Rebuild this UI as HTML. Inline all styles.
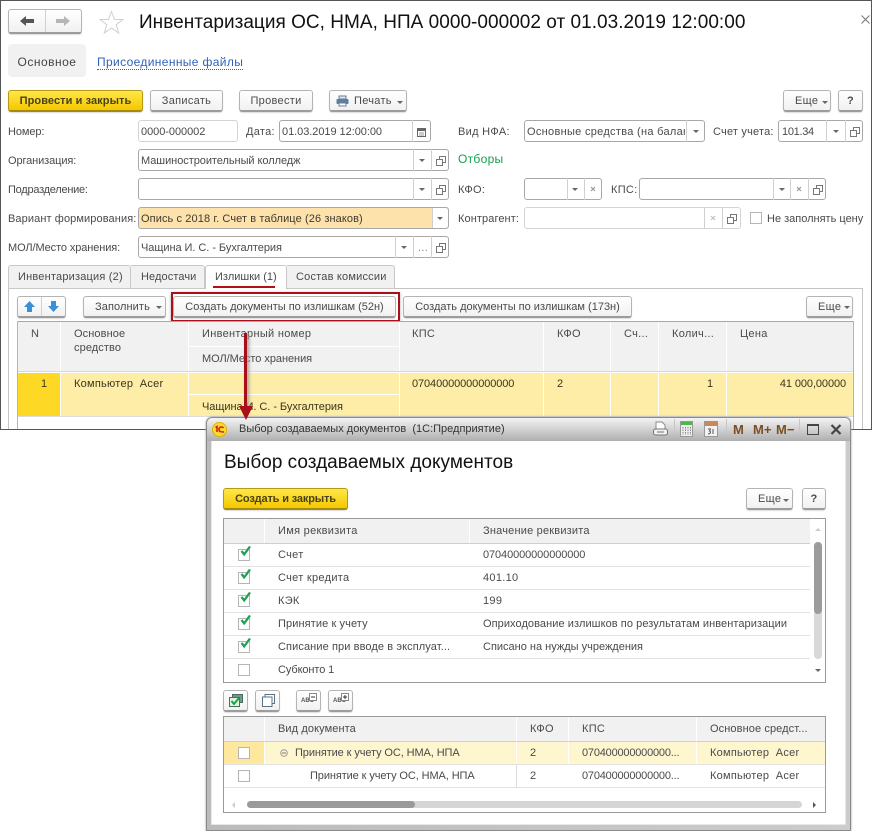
<!DOCTYPE html>
<html lang="ru"><head><meta charset="utf-8"><title>Инвентаризация</title>
<style>
html,body{margin:0;padding:0;background:#fff}
#p{position:relative;width:872px;height:831px;overflow:hidden;background:#fff;font:11px/14px "Liberation Sans","Noto Sans CJK SC",sans-serif;color:#4a4a4a;letter-spacing:.3px}
#p div,#p i,#p svg.a,#p span{position:absolute;box-sizing:border-box;display:block}
.t{white-space:nowrap;height:14px;margin-top:1px}
.c{text-align:center}
.b{height:22px;border:1px solid #b4b4b4;border-bottom:2px solid #9c9c9c;border-radius:3px;background:linear-gradient(#fff,#f1f1f1);text-align:center;line-height:20px;white-space:nowrap;box-shadow:0 1px 1px #ddd}
.y{background:linear-gradient(#ffe74a,#f5c800);border-color:#b89a10;border-bottom-color:#a78a08;color:#4a4216}
.f{height:22px;border:1px solid #a8a8a8;border-radius:3px;background:#fff}
.l{border-color:#d4d4d4}
.v{width:1px;background:#d0d0d0}
.h{height:1px;background:#e2e2e2}
.g{width:1px;background:#dcdcdc}
.dn{width:0;height:0;border-left:3px solid transparent;border-right:3px solid transparent;border-top:3px solid #666}
.k{width:12px;height:12px;border:1px solid #b5b5b5;background:#fff}
.w{width:1px;background:#fff}
.n{letter-spacing:-.1px}
.m{letter-spacing:-.05px}
.z{letter-spacing:0}
.o{letter-spacing:.1px}
.q{letter-spacing:.2px}
</style></head><body><div id="p">
<svg width="0" height="0" style="position:absolute"><defs>
<symbol id="o" viewBox="0 0 10 10"><path d="M3.500 3V.5h6v6H7M.5 3.500h6v6h-6z" fill="none" stroke="#777"/></symbol>
<symbol id="x" viewBox="0 0 6 6"><path d="M1 1l4 4M5 1L1 5" stroke="#999" stroke-width="1.200"/></symbol>
<symbol id="ch" viewBox="0 0 12 12"><path d="M2.500 5l2.700 3.400L11 0.500" fill="none" stroke="#1fa055" stroke-width="2.300"/></symbol>
</defs></svg>

<!-- outer frame -->
<div style="left:0;top:0;width:872px;height:430px;border:1px solid #555"></div>

<!-- nav -->
<div class="b" style="left:8px;top:9px;width:74px;height:25px"></div>
<i class="v" style="left:45px;top:10px;height:22px"></i>
<svg class="a" style="left:19px;top:15px" width="16" height="12"><path d="M1 6l6-5v3h8v4H7v3z" fill="#555"/></svg>
<svg class="a" style="left:55px;top:15px" width="16" height="12"><path d="M15 6L9 1v3H1v4h8v3z" fill="#b5b5b5"/></svg>
<svg class="a" style="left:99px;top:10px" width="25" height="24"><path d="M12.500 1.500l3 8h8.500l-6.800 5.200 2.500 8.300-7.200-5-7.200 5 2.500-8.300L1 9.500h8.500z" fill="#fff" stroke="#d0d0d0"/></svg>
<div class="t" style="left:139px;top:11px;height:22px;font-size:19px;line-height:22px;color:#111;letter-spacing:.03px">Инвентаризация ОС, НМА, НПА 0000-000002 от 01.03.2019 12:00:00</div>
<svg class="a" style="left:861px;top:15px" width="9" height="9"><path d="M.5.500l8 8M8.500.5l-8 8" stroke="#777"/></svg>

<div style="left:8px;top:44px;width:78px;height:33px;background:#f1f1f1;border-radius:4px"></div>
<div class="t c" style="left:8px;top:54px;width:78px;font-size:12px;color:#444;letter-spacing:.5px">Основное</div>
<div class="t" style="left:97px;top:54px;font-size:12px;color:#2f63b8;border-bottom:1px dotted #2f63b8;height:15px;letter-spacing:.36px">Присоединенные файлы</div>

<!-- command bar -->
<div class="b y" style="left:8px;top:90px;width:135px;font-weight:bold;letter-spacing:.08px">Провести и закрыть</div>
<div class="b" style="left:150px;top:90px;width:73px">Записать</div>
<div class="b" style="left:239px;top:90px;width:74px">Провести</div>
<div class="b" style="left:329px;top:90px;width:78px;text-align:left;padding-left:24px">Печать</div>
<svg class="a" style="left:336px;top:95px" width="13" height="12"><path d="M3 1h7v3H3z" fill="#dfe7ef" stroke="#6b7f95"/><rect x="0.500" y="4" width="12" height="5" rx="1" fill="#5f7d9c"/><path d="M3 8h7v3H3z" fill="#fff" stroke="#6b7f95"/></svg>
<i class="dn" style="left:397px;top:101px"></i>
<div class="b" style="left:783px;top:90px;width:48px;text-align:left;padding-left:11px">Еще</div>
<i class="dn" style="left:822px;top:101px"></i>
<div class="b" style="left:838px;top:90px;width:25px;font-weight:bold">?</div>

<!-- row 1 -->
<div class="t n" style="left:8px;top:124px">Номер:</div>
<div class="f l" style="left:138px;top:120px;width:100px"></div>
<div class="t m" style="left:141px;top:124px">0000-000002</div>
<div class="t" style="left:246px;top:124px">Дата:</div>
<div class="f" style="left:279px;top:120px;width:152px"></div>
<div class="t m" style="left:282px;top:124px">01.03.2019 12:00:00</div>
<i class="v" style="left:412px;top:120px;height:22px"></i>
<svg class="a" style="left:417px;top:127px" width="10" height="10"><rect x=".5" y="1.500" width="8" height="8" fill="#fff" stroke="#666"/><path d="M1 1h7v3H1z" fill="#666"/><path d="M2 6h5M2 8h5" stroke="#999"/></svg>
<div class="t" style="left:458px;top:124px">Вид НФА:</div>
<div class="f" style="left:524px;top:120px;width:181px"></div>
<div class="t" style="left:527px;top:124px;width:158px;overflow:hidden">Основные средства (на баланс</div>
<i class="v" style="left:686px;top:120px;height:22px"></i><i class="dn" style="left:693px;top:130px"></i>
<div class="t q" style="left:713px;top:124px">Счет учета:</div>
<div class="f" style="left:778px;top:120px;width:85px"></div>
<div class="t" style="left:782px;top:124px;letter-spacing:-.3px">101.34</div>
<i class="v" style="left:826px;top:120px;height:22px"></i><i class="dn" style="left:833px;top:130px"></i>
<i class="v" style="left:845px;top:120px;height:22px"></i><svg class="a" style="left:850px;top:127px" width="10" height="10"><use href="#o"/></svg>

<!-- row 2 -->
<div class="t n" style="left:8px;top:153px">Организация:</div>
<div class="f" style="left:138px;top:149px;width:311px"></div>
<div class="t m" style="left:141px;top:153px">Машиностроительный колледж</div>
<i class="v" style="left:413px;top:149px;height:22px"></i><i class="dn" style="left:419px;top:159px"></i>
<i class="v" style="left:431px;top:149px;height:22px"></i><svg class="a" style="left:436px;top:156px" width="10" height="10"><use href="#o"/></svg>
<div class="t" style="left:458px;top:150px;font-size:12px;color:#13a04f;height:16px;line-height:16px">Отборы</div>

<!-- row 3 -->
<div class="t" style="left:8px;top:182px;letter-spacing:-.25px">Подразделение:</div>
<div class="f" style="left:138px;top:178px;width:311px"></div>
<i class="v" style="left:413px;top:178px;height:22px"></i><i class="dn" style="left:419px;top:188px"></i>
<i class="v" style="left:431px;top:178px;height:22px"></i><svg class="a" style="left:436px;top:185px" width="10" height="10"><use href="#o"/></svg>
<div class="t" style="left:458px;top:182px">КФО:</div>
<div class="f" style="left:524px;top:178px;width:78px"></div>
<i class="v" style="left:567px;top:178px;height:22px"></i><i class="dn" style="left:572px;top:188px"></i>
<i class="v" style="left:584px;top:178px;height:22px"></i><svg class="a" style="left:590px;top:186px" width="6" height="6"><use href="#x"/></svg>
<div class="t" style="left:611px;top:182px">КПС:</div>
<div class="f" style="left:639px;top:178px;width:187px"></div>
<i class="v" style="left:773px;top:178px;height:22px"></i><i class="dn" style="left:779px;top:188px"></i>
<i class="v" style="left:790px;top:178px;height:22px"></i><svg class="a" style="left:796px;top:186px" width="6" height="6"><use href="#x"/></svg>
<i class="v" style="left:808px;top:178px;height:22px"></i><svg class="a" style="left:813px;top:185px" width="10" height="10"><use href="#o"/></svg>

<!-- row 4 -->
<div class="t o" style="left:8px;top:211px">Вариант формирования:</div>
<div class="f" style="left:138px;top:207px;width:311px;background:#fde2ab"></div>
<div style="left:432px;top:208px;width:16px;height:20px;background:#fff;border-left:1px solid #d0d0d0;border-radius:0 3px 3px 0"></div>
<div class="t o" style="left:141px;top:211px;color:#3f3a30">Опись с 2018 г. Счет в таблице (26 знаков)</div>
<i class="dn" style="left:437px;top:217px"></i>
<div class="t o" style="left:458px;top:211px">Контрагент:</div>
<div class="f l" style="left:524px;top:207px;width:217px"></div>
<i class="v" style="left:704px;top:207px;height:22px"></i><svg class="a" style="left:710px;top:215px" width="6" height="6" opacity=".6"><use href="#x"/></svg>
<i class="v" style="left:722px;top:207px;height:22px"></i><svg class="a" style="left:727px;top:214px" width="10" height="10"><use href="#o"/></svg>
<i class="k" style="left:750px;top:212px"></i>
<div class="t z" style="left:767px;top:211px">Не заполнять цену</div>

<!-- row 5 -->
<div class="t n" style="left:8px;top:240px">МОЛ/Место хранения:</div>
<div class="f" style="left:138px;top:236px;width:311px"></div>
<div class="t m" style="left:141px;top:240px">Чащина И. С. - Бухгалтерия</div>
<i class="v" style="left:395px;top:236px;height:22px"></i><i class="dn" style="left:401px;top:246px"></i>
<i class="v" style="left:413px;top:236px;height:22px"></i><div class="t" style="left:418px;top:240px;color:#888">...</div>
<i class="v" style="left:431px;top:236px;height:22px"></i><svg class="a" style="left:436px;top:243px" width="10" height="10"><use href="#o"/></svg>

<!-- tabs -->
<div style="left:8px;top:288px;width:855px;height:141px;border:1px solid #c4c4c4;border-bottom:0"></div>
<div style="left:8px;top:265px;width:123px;height:24px;background:#f1f1f1;border:1px solid #c8c8c8;border-radius:3px 3px 0 0"></div>
<div class="t q" style="left:18px;top:269px">Инвентаризация (2)</div>
<div style="left:131px;top:265px;width:74px;height:24px;background:#f1f1f1;border:1px solid #c8c8c8;border-left:0;border-radius:0 3px 0 0"></div>
<div class="t o" style="left:141px;top:269px">Недостачи</div>
<div style="left:205px;top:265px;width:82px;height:24px;background:#fff;border:1px solid #c8c8c8;border-bottom:0;border-radius:3px 3px 0 0"></div>
<div class="t z" style="left:215px;top:269px">Излишки (1)</div>
<div style="left:213px;top:286px;width:62px;height:2px;background:#b3101a"></div>
<div style="left:287px;top:265px;width:108px;height:24px;background:#f1f1f1;border:1px solid #c8c8c8;border-left:0;border-radius:0 3px 0 0"></div>
<div class="t q" style="left:296px;top:269px">Состав комиссии</div>

<!-- toolbar -->
<div class="b" style="left:17px;top:296px;width:49px"></div>
<i class="v" style="left:41px;top:297px;height:19px"></i>
<svg class="a" style="left:24px;top:301px" width="11" height="11"><path d="M5.500 0L11 6H8v5H3V6H0z" fill="#3b8fd4"/></svg>
<svg class="a" style="left:48px;top:301px" width="11" height="11"><path d="M5.500 11L0 5h3V0h5v5h3z" fill="#3b8fd4"/></svg>
<div class="b o" style="left:83px;top:296px;width:83px;text-align:left;padding-left:11px">Заполнить</div>
<i class="dn" style="left:156px;top:306px"></i>
<div class="b z" style="left:173px;top:296px;width:223px">Создать документы по излишкам (52н)</div>
<div style="left:171px;top:292px;width:229px;height:30px;border:2px solid #a90f18;box-shadow:0 1px 3px #aaa"></div>
<div class="b z" style="left:403px;top:296px;width:229px">Создать документы по излишкам (173н)</div>
<div class="b" style="left:806px;top:296px;width:47px;text-align:left;padding-left:11px">Еще</div>
<i class="dn" style="left:844px;top:306px"></i>

<!-- main table -->
<div style="left:17px;top:321px;width:836px;height:1px;background:#a8a8a8"></div>
<div style="left:17px;top:321px;width:1px;height:108px;background:#b4b4b4"></div>
<div style="left:853px;top:321px;width:1px;height:108px;background:#b4b4b4"></div>
<div style="left:18px;top:322px;width:835px;height:49px;background:#f1f1f1"></div>
<i class="w" style="left:60px;top:322px;height:49px"></i><i class="w" style="left:188px;top:322px;height:49px"></i><i class="w" style="left:399px;top:322px;height:49px"></i><i class="w" style="left:543px;top:322px;height:49px"></i><i class="w" style="left:610px;top:322px;height:49px"></i><i class="w" style="left:658px;top:322px;height:49px"></i><i class="w" style="left:726px;top:322px;height:49px"></i>
<div style="left:188px;top:346px;width:211px;height:1px;background:#fff"></div>
<div style="left:18px;top:371px;width:835px;height:1px;background:#d8d8d8"></div>
<div class="t" style="left:31px;top:326px">N</div>
<div class="t o" style="left:74px;top:326px">Основное</div>
<div class="t o" style="left:74px;top:340px">средство</div>
<div class="t" style="left:202px;top:326px">Инвентарный номер</div>
<div class="t m" style="left:202px;top:351px">МОЛ/Место хранения</div>
<div class="t" style="left:412px;top:326px">КПС</div>
<div class="t" style="left:557px;top:326px">КФО</div>
<div class="t" style="left:624px;top:326px">Сч...</div>
<div class="t" style="left:672px;top:326px">Колич...</div>
<div class="t" style="left:740px;top:326px">Цена</div>

<div style="left:18px;top:373px;width:835px;height:43px;background:#fdeda6"></div>
<div style="left:18px;top:373px;width:42px;height:43px;background:#fdd925"></div>
<i class="w" style="left:60px;top:373px;height:43px"></i><i class="w" style="left:188px;top:373px;height:43px"></i><i class="w" style="left:399px;top:373px;height:43px"></i><i class="w" style="left:543px;top:373px;height:43px"></i><i class="w" style="left:610px;top:373px;height:43px"></i><i class="w" style="left:658px;top:373px;height:43px"></i><i class="w" style="left:726px;top:373px;height:43px"></i>
<div style="left:188px;top:394px;width:211px;height:1px;background:#fff"></div>
<div style="left:18px;top:416px;width:835px;height:1px;background:#ddd"></div>
<div class="t" style="left:41px;top:376px;color:#3a3520">1</div>
<div class="t" style="left:74px;top:376px;color:#3a3520;letter-spacing:.25px">Компьютер&nbsp; Acer</div>
<div class="t n" style="left:412px;top:376px;color:#3a3520">07040000000000000</div>
<div class="t" style="left:557px;top:376px;color:#3a3520">2</div>
<div class="t" style="left:707px;top:376px;color:#3a3520">1</div>
<div class="t n" style="left:766px;top:376px;width:80px;text-align:right;color:#3a3520">41 000,00000</div>
<div class="t m" style="left:202px;top:399px;color:#3a3520">Чащина И. С. - Бухгалтерия</div>

<!-- dialog -->
<div style="left:206px;top:417px;width:645px;height:414px;background:linear-gradient(90deg,#bbb,#ccc);border:1px solid #8a8a8a;border-radius:6px 6px 0 0;box-shadow:0 0 2px #999"></div>
<div style="left:207px;top:418px;width:643px;height:23px;background:linear-gradient(#f4f4f4,#aeaeae);border-radius:5px 5px 0 0"></div>
<div style="left:211px;top:441px;width:635px;height:384px;background:#fff;border:1px solid #e8e8e8;border-top:0"></div>
<svg class="a" style="left:212px;top:422px" width="15" height="15"><circle cx="7.500" cy="7.500" r="7" fill="#ffd92e" stroke="#e0b000"/><path d="M3.500 5.500L5 4.500V10M7 7.500c0-3 3.500-3 4.500-1.500M7 7.500c0 2 1.500 2.500 5 2.500" fill="none" stroke="#d3141a" stroke-width="1.500"/></svg>
<div class="t z" style="left:239px;top:421px;color:#333">Выбор создаваемых документов&nbsp; (1С:Предприятие)</div>
<svg class="a" style="left:653px;top:421px" width="15" height="16"><path d="M3 1h6l3 3v4H3z" fill="#fff" stroke="#8a8a8a"/><rect x=".5" y="8" width="14" height="6" rx="2" fill="#f1f1f1" stroke="#777"/><path d="M4 11h7" stroke="#777"/></svg>
<i class="v" style="left:674px;top:419px;height:14px;background:#c6c6c6"></i>
<svg class="a" style="left:680px;top:421px" width="14" height="16"><rect x=".5" y=".5" width="12" height="15" fill="#ededed" stroke="#999"/><rect x="1" y="1" width="11" height="3" fill="#4cb84c"/><path d="M3 6v8M5.500 6v8M8 6v8M10.500 6v8" stroke="#888" stroke-dasharray="1.500 1"/></svg>
<svg class="a" style="left:704px;top:421px" width="14" height="16"><rect x=".5" y=".5" width="13" height="15" fill="#f2f2f2" stroke="#999"/><rect x="1" y="1" width="12" height="4" fill="#c8885a"/><path d="M4 8h2.500l-1 2c1.500 0 1.500 3-1.500 3M9 8v5" fill="none" stroke="#555"/></svg>
<i class="v" style="left:726px;top:419px;height:14px;background:#c6c6c6"></i>
<div class="t" style="left:733px;top:422px;font:bold 13px/14px 'Liberation Sans',sans-serif;color:#7d4d22;letter-spacing:0">М</div>
<div class="t" style="left:753px;top:422px;font:bold 13px/14px 'Liberation Sans',sans-serif;color:#7d4d22;letter-spacing:0">М+</div>
<div class="t" style="left:776px;top:422px;font:bold 13px/14px 'Liberation Sans',sans-serif;color:#7d4d22;letter-spacing:0">М−</div>
<i class="v" style="left:799px;top:419px;height:14px;background:#c6c6c6"></i>
<div style="left:807px;top:424px;width:12px;height:11px;border:1px solid #444;border-top-width:2px"></div>
<svg class="a" style="left:830px;top:424px" width="12" height="11"><path d="M1.500 1l9 9M10.500 1l-9 9" stroke="#444" stroke-width="2.200"/></svg>

<div class="t" style="left:224px;top:451px;height:22px;font-size:19px;line-height:22px;color:#111;letter-spacing:.01px">Выбор создаваемых документов</div>
<div class="b y" style="left:223px;top:488px;width:125px;font-weight:bold;letter-spacing:-.15px">Создать и закрыть</div>
<div class="b" style="left:746px;top:488px;width:47px;text-align:left;padding-left:11px">Еще</div><i class="dn" style="left:783px;top:499px"></i>
<div class="b" style="left:802px;top:488px;width:24px;font-weight:bold">?</div>

<!-- table 1 -->
<div style="left:223px;top:518px;width:603px;height:165px;border:1px solid #9a9a9a;background:#fff"></div>
<div style="left:224px;top:519px;width:586px;height:24px;background:#f1f1f1"></div>
<i class="w" style="left:264px;top:519px;height:24px"></i><i class="w" style="left:469px;top:519px;height:24px"></i>
<div class="h" style="left:224px;top:543px;width:586px;background:#cfcfcf"></div>
<div class="t" style="left:278px;top:523px">Имя реквизита</div>
<div class="t q" style="left:483px;top:523px">Значение реквизита</div>
<div class="h" style="left:224px;top:566px;width:586px"></div><div class="h" style="left:224px;top:589px;width:586px"></div><div class="h" style="left:224px;top:612px;width:586px"></div><div class="h" style="left:224px;top:635px;width:586px"></div><div class="h" style="left:224px;top:658px;width:586px"></div>
<i class="k" style="left:238px;top:549px"></i><svg class="a" style="left:239px;top:546px" width="12" height="12"><use href="#ch"/></svg>
<i class="k" style="left:238px;top:572px"></i><svg class="a" style="left:239px;top:569px" width="12" height="12"><use href="#ch"/></svg>
<i class="k" style="left:238px;top:595px"></i><svg class="a" style="left:239px;top:592px" width="12" height="12"><use href="#ch"/></svg>
<i class="k" style="left:238px;top:618px"></i><svg class="a" style="left:239px;top:615px" width="12" height="12"><use href="#ch"/></svg>
<i class="k" style="left:238px;top:641px"></i><svg class="a" style="left:239px;top:638px" width="12" height="12"><use href="#ch"/></svg>
<i class="k" style="left:238px;top:664px"></i>
<div class="t" style="left:278px;top:547px">Счет</div><div class="t n" style="left:483px;top:547px">07040000000000000</div>
<div class="t" style="left:278px;top:570px">Счет кредита</div><div class="t" style="left:483px;top:570px">401.10</div>
<div class="t" style="left:278px;top:593px">КЭК</div><div class="t" style="left:483px;top:593px">199</div>
<div class="t o" style="left:278px;top:616px">Принятие к учету</div><div class="t" style="left:483px;top:616px;letter-spacing:.07px">Оприходование излишков по результатам инвентаризации</div>
<div class="t o" style="left:278px;top:639px">Списание при вводе в эксплуат...</div><div class="t z" style="left:483px;top:639px">Списано на нужды учреждения</div>
<div class="t n" style="left:278px;top:662px">Субконто 1</div>
<div style="left:814px;top:542px;width:8px;height:117px;background:#d8d8d8;border-radius:4px"></div>
<div style="left:814px;top:542px;width:8px;height:72px;background:#9c9c9c;border-radius:4px"></div>
<i class="dn" style="left:815px;top:528px;border-top:0;border-bottom:3px solid #ccc"></i>
<i class="dn" style="left:815px;top:669px"></i>

<!-- icon toolbar -->
<div class="b" style="left:223px;top:690px;width:25px"></div>
<svg class="a" style="left:229px;top:694px" width="14" height="13"><path d="M3.500 3V.5h10v8H11" fill="#6e9a8a" stroke="#4b6d62"/><rect x=".5" y="3.500" width="10" height="9" fill="#dff3de" stroke="#4b6d62"/><path d="M2.500 7l2.500 3 5-6" fill="none" stroke="#17a24e" stroke-width="2"/></svg>
<div class="b" style="left:255px;top:690px;width:25px"></div>
<svg class="a" style="left:262px;top:694px" width="13" height="13"><path d="M3 3V.5h9.500v9H10" fill="#fff" stroke="#5b7080"/><rect x=".5" y="3" width="9.500" height="9.500" fill="#fff" stroke="#5b7080"/></svg>
<div class="b" style="left:296px;top:690px;width:25px"></div>
<div class="t" style="left:301px;top:696px;font-size:6px;letter-spacing:0;height:9px;line-height:9px;color:#555;font-weight:bold">ABC</div>
<svg class="a" style="left:309px;top:693px" width="8" height="8"><rect x=".5" y=".5" width="7" height="7" fill="#fff" stroke="#888"/><path d="M2 4h4" stroke="#333"/></svg>
<div class="b" style="left:328px;top:690px;width:25px"></div>
<div class="t" style="left:333px;top:696px;font-size:6px;letter-spacing:0;height:9px;line-height:9px;color:#555;font-weight:bold">ABC</div>
<svg class="a" style="left:341px;top:693px" width="8" height="8"><rect x=".5" y=".5" width="7" height="7" fill="#fff" stroke="#888"/><path d="M2 4h4M4 2v4" stroke="#333"/></svg>

<!-- table 2 -->
<div style="left:223px;top:716px;width:603px;height:97px;border:1px solid #9a9a9a;background:#fff"></div>
<div style="left:224px;top:717px;width:601px;height:24px;background:#f1f1f1"></div>
<i class="w" style="left:264px;top:717px;height:24px"></i><i class="w" style="left:516px;top:717px;height:24px"></i><i class="w" style="left:568px;top:717px;height:24px"></i><i class="w" style="left:696px;top:717px;height:24px"></i>
<div class="h" style="left:224px;top:741px;width:601px;background:#cfcfcf"></div>
<div class="t o" style="left:278px;top:721px">Вид документа</div><div class="t" style="left:530px;top:721px">КФО</div><div class="t" style="left:582px;top:721px">КПС</div><div class="t o" style="left:710px;top:721px">Основное средст...</div>
<div style="left:224px;top:742px;width:601px;height:22px;background:#fef6cf"></div>
<div style="left:224px;top:742px;width:40px;height:22px;background:#fde89e"></div>
<i class="w" style="left:264px;top:742px;height:22px"></i><i class="w" style="left:516px;top:742px;height:22px"></i><i class="w" style="left:568px;top:742px;height:22px"></i><i class="w" style="left:696px;top:742px;height:22px"></i>
<div class="h" style="left:224px;top:764px;width:601px"></div><div class="h" style="left:224px;top:787px;width:601px"></div>
<i class="g" style="left:516px;top:765px;height:22px"></i>
<i class="k" style="left:238px;top:747px"></i><i class="k" style="left:238px;top:770px"></i>
<svg class="a" style="left:280px;top:749px" width="8" height="8"><circle cx="4" cy="4" r="3.300" fill="none" stroke="#999"/><path d="M2 4h4" stroke="#777"/></svg>
<div class="t n" style="left:295px;top:745px">Принятие к учету ОС, НМА, НПА</div><div class="t" style="left:530px;top:745px">2</div><div class="t" style="left:582px;top:745px;letter-spacing:-.2px">070400000000000...</div><div class="t" style="left:710px;top:745px;letter-spacing:.25px">Компьютер&nbsp; Acer</div>
<div class="t n" style="left:310px;top:768px">Принятие к учету ОС, НМА, НПА</div><div class="t" style="left:530px;top:768px">2</div><div class="t" style="left:582px;top:768px;letter-spacing:-.2px">070400000000000...</div><div class="t" style="left:710px;top:768px;letter-spacing:.25px">Компьютер&nbsp; Acer</div>
<div style="left:247px;top:801px;width:555px;height:7px;background:#d6d6d6;border-radius:4px"></div>
<div style="left:247px;top:801px;width:168px;height:7px;background:#9a9a9a;border-radius:4px"></div>
<i style="left:232px;top:802px;width:0;height:0;border-top:3px solid transparent;border-bottom:3px solid transparent;border-right:3px solid #ccc"></i>
<i style="left:813px;top:802px;width:0;height:0;border-top:3px solid transparent;border-bottom:3px solid transparent;border-left:3px solid #555"></i>

<!-- red arrow -->
<div style="left:244px;top:333px;width:3px;height:76px;background:#a90f18;box-shadow:2px 1px 3px #999"></div>
<svg class="a" style="left:238px;top:406px" width="16" height="15"><path d="M1 0h14l-7 14z" fill="#a90f18"/></svg>
</div></body></html>
